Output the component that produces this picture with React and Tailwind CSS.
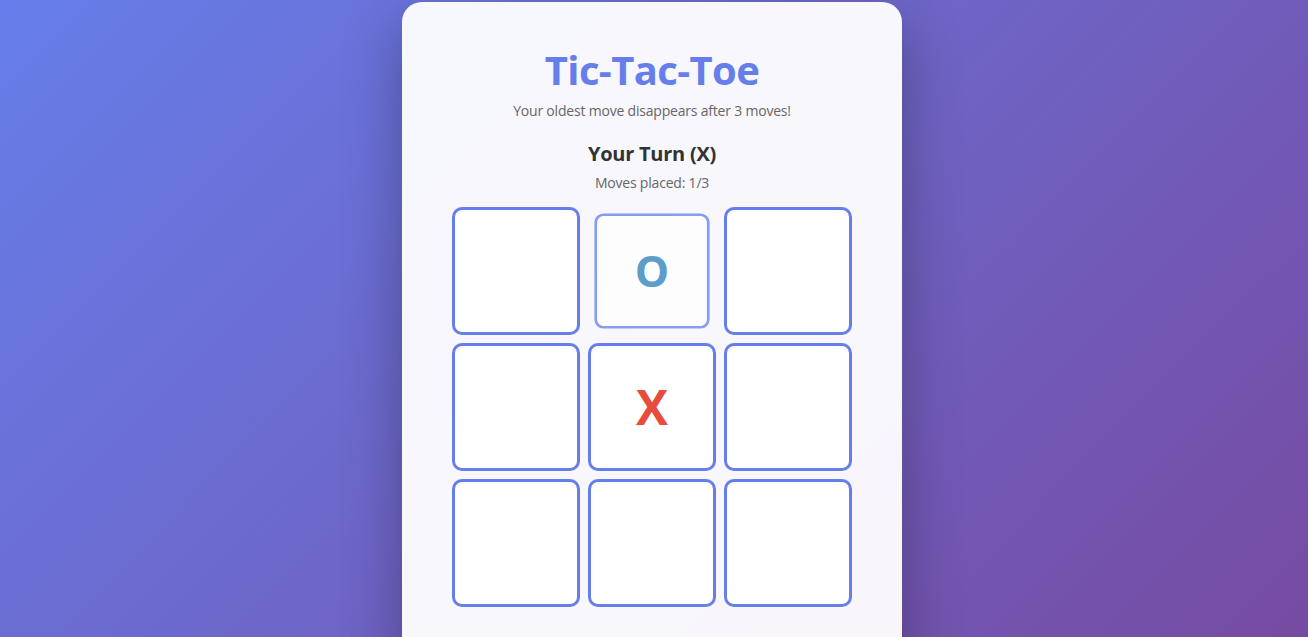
import { useState } from "react";

// board layout: index -> mark, with the oldest O shown as fading
const START = [null, "O", null, null, "X", null, null, null, null];
const FADING = 1;

function Cell({ value, fading }) {
  const color = value === "X" ? "text-[#e74c3c]" : "text-[#2980b9]";
  return (
    <button
      className={`flex items-center justify-center w-[128px] h-[128px] rounded-[10px] border-[3px] border-[#667eea] bg-white text-[48px] font-bold leading-none ${color} ${
        fading ? "scale-90 opacity-75" : ""
      }`}
    >
      {value}
    </button>
  );
}

export default function App() {
  const [board] = useState(START);

  return (
    <div
      className="min-h-screen h-[637px] overflow-hidden bg-[linear-gradient(135deg,#667eea_0%,#764ba2_100%)] flex justify-center pt-[2px] pr-[4px]"
      style={{ fontFamily: '"Open Sans", sans-serif' }}
    >
      <div className="w-[500px] h-[700px] shrink-0 rounded-[20px] bg-white/95 shadow-[0_20px_60px_rgba(0,0,0,0.3)] px-[50px] pt-[44px] flex flex-col items-center">
        <h1 className="text-[40px] font-bold leading-[1.2] tracking-[-0.6px] text-[#667eea]">Tic-Tac-Toe</h1>
        <p className="mt-[6px] text-[14px] tracking-[-0.2px] text-[#666]">Your oldest move disappears after 3 moves!</p>

        <h2 className="mt-[18px] text-[20px] font-bold tracking-[-0.25px] text-[#333]">Your Turn (X)</h2>
        <p className="mt-[3px] text-[14px] tracking-[-0.2px] text-[#666]">Moves placed: 1/3</p>

        <div className="mt-[14px] grid grid-cols-3 gap-[8px]">
          {board.map((v, i) => (
            <Cell key={i} value={v} fading={i === FADING} />
          ))}
        </div>
      </div>
    </div>
  );
}
